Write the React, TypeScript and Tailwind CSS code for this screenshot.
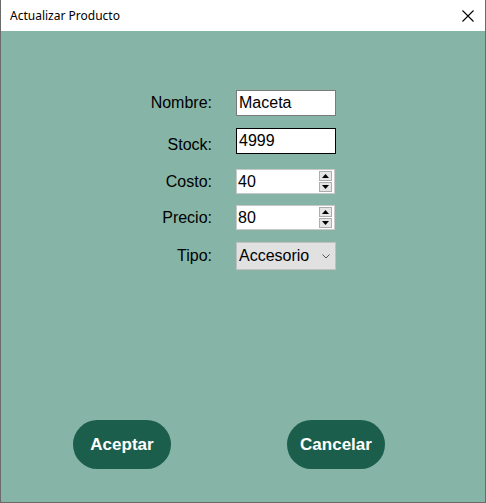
import React from "react";

const Spin = () => (
  <div className="flex flex-col w-[13px] h-[21px] mr-[2px] gap-[1px]">
    <div className="flex-1 border border-[#adadad] bg-[#e5e5e5] flex items-center justify-center">
      <svg width="7" height="4" viewBox="0 0 7 4"><path d="M0 4 L3.5 0 L7 4 Z" fill="#000" /></svg>
    </div>
    <div className="flex-1 border border-[#adadad] bg-[#e5e5e5] flex items-center justify-center">
      <svg width="7" height="4" viewBox="0 0 7 4"><path d="M0 0 L3.5 4 L7 0 Z" fill="#000" /></svg>
    </div>
  </div>
);

export default function App() {
  const label = "w-[211px] text-right pr-0 text-[16px] text-black";
  return (
    <div className="w-[486px] h-[503px] flex flex-col bg-white border-l border-b border-r border-[#6b6b6b] font-['Liberation_Sans',Arial,sans-serif] overflow-hidden">
      <div className="h-[31px] shrink-0 flex items-center justify-between pl-[9px] pr-[11px] bg-white">
        <span className="text-[12px] text-black font-['Noto_Sans',sans-serif] leading-none">Actualizar Producto</span>
        <svg width="12" height="12" viewBox="0 0 12 12" className="mt-[0px]">
          <path d="M0.5 0.5 L11.5 11.5 M11.5 0.5 L0.5 11.5" stroke="#000" strokeWidth="1.1" />
        </svg>
      </div>
      <div className="flex-1 bg-[#86b5a7] flex flex-col">
        <div className="flex flex-col pt-[59px]">
          <div className="flex items-center h-[26px]">
            <div className={label}>Nombre:</div>
            <div className="ml-[24px] w-[100px] h-[26px] bg-white border border-[#7a7a7a] flex items-center pl-[2px] text-[16px] text-black">Maceta</div>
          </div>
          <div className="flex items-center h-[26px] mt-[12px]">
            <div className={label + " mt-[7px]"}>Stock:</div>
            <div className="ml-[24px] w-[100px] h-[26px] bg-white border border-[#000] flex items-center pl-[2px] text-[16px] text-black">4999</div>
          </div>
          <div className="flex items-center h-[25px] mt-[15px]">
            <div className={label}>Costo:</div>
            <div className="ml-[24px] w-[99px] h-[25px] bg-white border border-[#c8c8c8] flex items-center justify-between pl-[1px] text-[16px] text-black">
              <span>40</span>
              <Spin />
            </div>
          </div>
          <div className="flex items-center h-[25px] mt-[11px]">
            <div className={label}>Precio:</div>
            <div className="ml-[24px] w-[99px] h-[25px] bg-white border border-[#c8c8c8] flex items-center justify-between pl-[1px] text-[16px] text-black">
              <span>80</span>
              <Spin />
            </div>
          </div>
          <div className="flex items-center h-[28px] mt-[12px]">
            <div className={label}>Tipo:</div>
            <div className="ml-[24px] w-[100px] h-[28px] bg-[#e1e1e1] border border-[#c0c0c0] flex items-center justify-between pl-[2px] pr-[5px] text-[16px] text-black">
              <span>Accesorio</span>
              <svg width="8" height="5" viewBox="0 0 8 5"><path d="M0.5 0.5 L4 4 L7.5 0.5" stroke="#555" strokeWidth="1" fill="none" /></svg>
            </div>
          </div>
        </div>
        <div className="flex mt-[150px] pl-[72px]">
          <button className="w-[98px] h-[49px] rounded-full bg-[#1b5e4b] text-white font-bold text-[17px]">Aceptar</button>
          <button className="ml-[116px] w-[98px] h-[49px] rounded-full bg-[#1b5e4b] text-white font-bold text-[17px]">Cancelar</button>
        </div>
      </div>
    </div>
  );
}
